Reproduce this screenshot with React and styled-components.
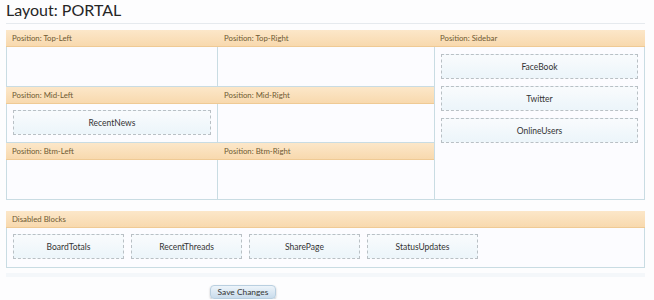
import React from "react";
import styled, { createGlobalStyle } from "styled-components";

const GlobalStyle = createGlobalStyle`
  html, body {
    margin: 0;
    padding: 0;
    background: #fdfdfe;
  }
  body {
    font-family: Lato, "Open Sans", Arial, sans-serif;
    color: #333;
  }
`;

const Page = styled.div`
  width: 654px;
  box-sizing: border-box;
  padding: 0 9px 0 6px;
`;

const Title = styled.h1`
  margin: 0;
  font-family: Lato, sans-serif;
  font-weight: 400;
  font-size: 16px;
  line-height: 20px;
  color: #262626;
  padding-bottom: 3px;
  border-bottom: 1px solid #e6eaee;
`;

const LayoutGrid = styled.div`
  margin-top: 6px;
  display: grid;
  grid-template-columns: 212px 216px 211px;
  grid-template-rows: 17px 40px 17px auto 17px 40px;
`;

const SectionHeader = styled.div`
  grid-column: ${(p) => p.$col || "auto"};
  grid-row: ${(p) => p.$row || "auto"};
  box-sizing: border-box;
  height: 17px;
  padding: 0 6px;
  background: linear-gradient(#fce7c9, #f8d9ae);
  border-bottom: 1px solid #efca95;
  color: #6f5a33;
  font-size: 7.8px;
  line-height: 16px;
  white-space: nowrap;
`;

const Cell = styled.div`
  grid-column: ${(p) => p.$col || "auto"};
  grid-row: ${(p) => p.$row || "auto"};
  box-sizing: border-box;
  background: #fcfcff;
  border-bottom: 1px solid #c9dce3;
  border-left: ${(p) => (p.$left ? "1px solid #c9dce3" : "none")};
  border-right: ${(p) => (p.$right ? "1px solid #c9dce3" : "none")};
  padding: 6px 6px 7px;
  display: flex;
  flex-direction: column;
  gap: 7px;
`;

const SidebarCell = styled(Cell)`
  padding-top: 7px;
`;

const Block = styled.div`
  box-sizing: border-box;
  height: 25px;
  width: ${(p) => (p.$fixed ? "111px" : "auto")};
  flex: none;
  border: 1px dashed #b9c0c5;
  background: linear-gradient(#f9fbfd, #ecf5fa);
  display: flex;
  align-items: center;
  justify-content: center;
  font-size: 8.5px;
  color: #333;
`;

const DisabledSection = styled.section`
  margin-top: 11px;
`;

const DisabledBody = styled.div`
  box-sizing: border-box;
  background: #fcfcff;
  border: 1px solid #c9dce3;
  border-top: none;
  padding: 6px 6px 8px;
  display: flex;
  gap: 7px;
`;

const SubmitRow = styled.div`
  margin-top: 5px;
  border-top: 4px solid #f4f7fa;
  padding: 2px 0 0 204px;
`;

const SaveButton = styled.button`
  box-sizing: border-box;
  width: 66px;
  height: 14px;
  padding: 0;
  border: 1px solid #b9cfe0;
  border-radius: 4px;
  background: linear-gradient(#edf4fa, #c9dcec);
  box-shadow: 0 1px 2px rgba(0, 0, 0, 0.25);
  font-family: Lato, sans-serif;
  font-size: 8.4px;
  line-height: 12px;
  color: #333;
  cursor: pointer;
`;

export default function App() {
  return (
    <Page>
      <GlobalStyle />
      <Title>Layout: PORTAL</Title>
      <LayoutGrid>
        <SectionHeader $col="1" $row="1">Position: Top-Left</SectionHeader>
        <SectionHeader $col="2" $row="1">Position: Top-Right</SectionHeader>
        <SectionHeader $col="3" $row="1">Position: Sidebar</SectionHeader>

        <Cell $col="1" $row="2" $left $right />
        <Cell $col="2" $row="2" />

        <SectionHeader $col="1" $row="3">Position: Mid-Left</SectionHeader>
        <SectionHeader $col="2" $row="3">Position: Mid-Right</SectionHeader>

        <Cell $col="1" $row="4" $left $right>
          <Block>RecentNews</Block>
        </Cell>
        <Cell $col="2" $row="4" />

        <SectionHeader $col="1" $row="5">Position: Btm-Left</SectionHeader>
        <SectionHeader $col="2" $row="5">Position: Btm-Right</SectionHeader>

        <Cell $col="1" $row="6" $left $right />
        <Cell $col="2" $row="6" />

        <SidebarCell $col="3" $row="2 / 7" $left $right>
          <Block>FaceBook</Block>
          <Block>Twitter</Block>
          <Block>OnlineUsers</Block>
        </SidebarCell>
      </LayoutGrid>

      <DisabledSection>
        <SectionHeader>Disabled Blocks</SectionHeader>
        <DisabledBody>
          <Block $fixed>BoardTotals</Block>
          <Block $fixed>RecentThreads</Block>
          <Block $fixed>SharePage</Block>
          <Block $fixed>StatusUpdates</Block>
        </DisabledBody>
      </DisabledSection>

      <SubmitRow>
        <SaveButton type="button">Save Changes</SaveButton>
      </SubmitRow>
    </Page>
  );
}
